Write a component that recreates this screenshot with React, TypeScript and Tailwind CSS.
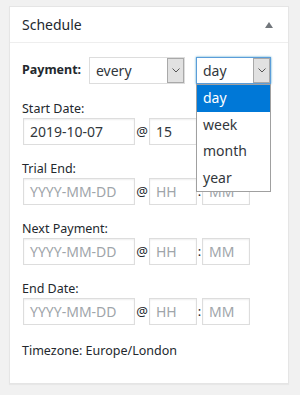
import React from 'react';

const font = { fontFamily: '"Noto Sans", "Open Sans", sans-serif' };

function Chevron() {
    return (
        <svg width="8" height="5" viewBox="0 0 8 5" fill="none">
            <path d="M0.5 0.5 L4 4 L7.5 0.5" stroke="#555" strokeWidth="1" />
        </svg>
    );
}

function FakeSelect({ value, width, focused }: { value: string; width: string; focused?: boolean }) {
    return (
        <div
            className={`flex h-[27px] items-stretch bg-white ${width} ${
                focused ? 'border border-[#5b9dd9] shadow-[0_0_2px_rgba(30,140,190,0.8)]' : 'border border-[#ddd]'
            }`}
        >
            <span className="flex-1 pl-[6px] text-[14px] leading-[25px] text-[#32373c]">{value}</span>
            <span className="flex w-[17px] items-center justify-center border border-[#a9a9a9] bg-[#e1e1e1]">
                <Chevron />
            </span>
        </div>
    );
}

function TextBox({ value, placeholder, width }: { value?: string; placeholder: string; width: string }) {
    return (
        <div
            className={`h-[27px] border border-[#ddd] bg-white pl-[6px] text-[14px] leading-[25px] shadow-[inset_0_1px_2px_rgba(0,0,0,0.07)] ${width}`}
        >
            {value ? <span className="text-[#32373c]">{value}</span> : <span className="text-[#a0a5aa]">{placeholder}</span>}
        </div>
    );
}

function DateRow({ label, date, hour }: { label: string; date?: string; hour?: string }) {
    return (
        <div className="flex flex-col">
            <div className="h-[18px] text-[12.5px] leading-[18px] text-[#23282d]">{label}</div>
            <div className="flex items-center pl-px">
                <TextBox value={date} placeholder="YYYY-MM-DD" width="w-[112px]" />
                <span className="w-[14px] text-center text-[13px] text-[#23282d]">@</span>
                <TextBox value={hour} placeholder="HH" width="w-[48px]" />
                <span className="w-[5px] text-center text-[13px] text-[#23282d]">:</span>
                <TextBox placeholder="MM" width="w-[48px]" />
            </div>
        </div>
    );
}

export default function App() {
    const units = ['day', 'week', 'month', 'year'];

    return (
        <div className="h-[395px] w-[300px] bg-[#f1f1f1] pl-[9px] pt-[6px]" style={font}>
            <div className="h-[378px] w-[280px] border border-[#e5e5e5] bg-white shadow-[0_1px_1px_rgba(0,0,0,0.04)]">
                {/* Header */}
                <div className="flex h-[36px] items-center justify-between border-b border-[#eee] pl-[12px] pr-[15px]">
                    <span className="text-[14px] text-[#23282d]">Schedule</span>
                    <svg width="8" height="6" viewBox="0 0 8 6">
                        <path d="M4 0 L8 6 L0 6 Z" fill="#72777c" />
                    </svg>
                </div>

                <div className="flex flex-col px-[12px] pt-[14px]">
                    {/* Payment interval */}
                    <div className="relative flex items-center">
                        <span className="w-[67px] text-[12.5px] font-bold text-[#23282d]">Payment:</span>
                        <FakeSelect value="every" width="w-[96px]" />
                        <div className="ml-[11px]">
                            <FakeSelect value="day" width="w-[75px]" focused />
                        </div>

                        {/* Open dropdown list */}
                        <div className="absolute left-[174px] top-[27px] z-10 w-[75px] border border-[#a0a0a0] bg-white">
                            {units.map((u, i) => (
                                <div
                                    key={u}
                                    className={`h-[26.5px] pl-[6px] text-[14px] leading-[26px] ${
                                        i === 0 ? 'bg-[#0078d7] text-white' : 'text-[#32373c]'
                                    }`}
                                >
                                    {u}
                                </div>
                            ))}
                        </div>
                    </div>

                    <div className="mt-[16px] flex flex-col gap-[15px]">
                        <DateRow label="Start Date:" date="2019-10-07" hour="15" />
                        <DateRow label="Trial End:" />
                        <DateRow label="Next Payment:" />
                        <DateRow label="End Date:" />
                    </div>

                    <div className="mt-[17px] text-[12.5px] leading-[18px] text-[#23282d]">Timezone: Europe/London</div>
                </div>
            </div>
        </div>
    );
}
